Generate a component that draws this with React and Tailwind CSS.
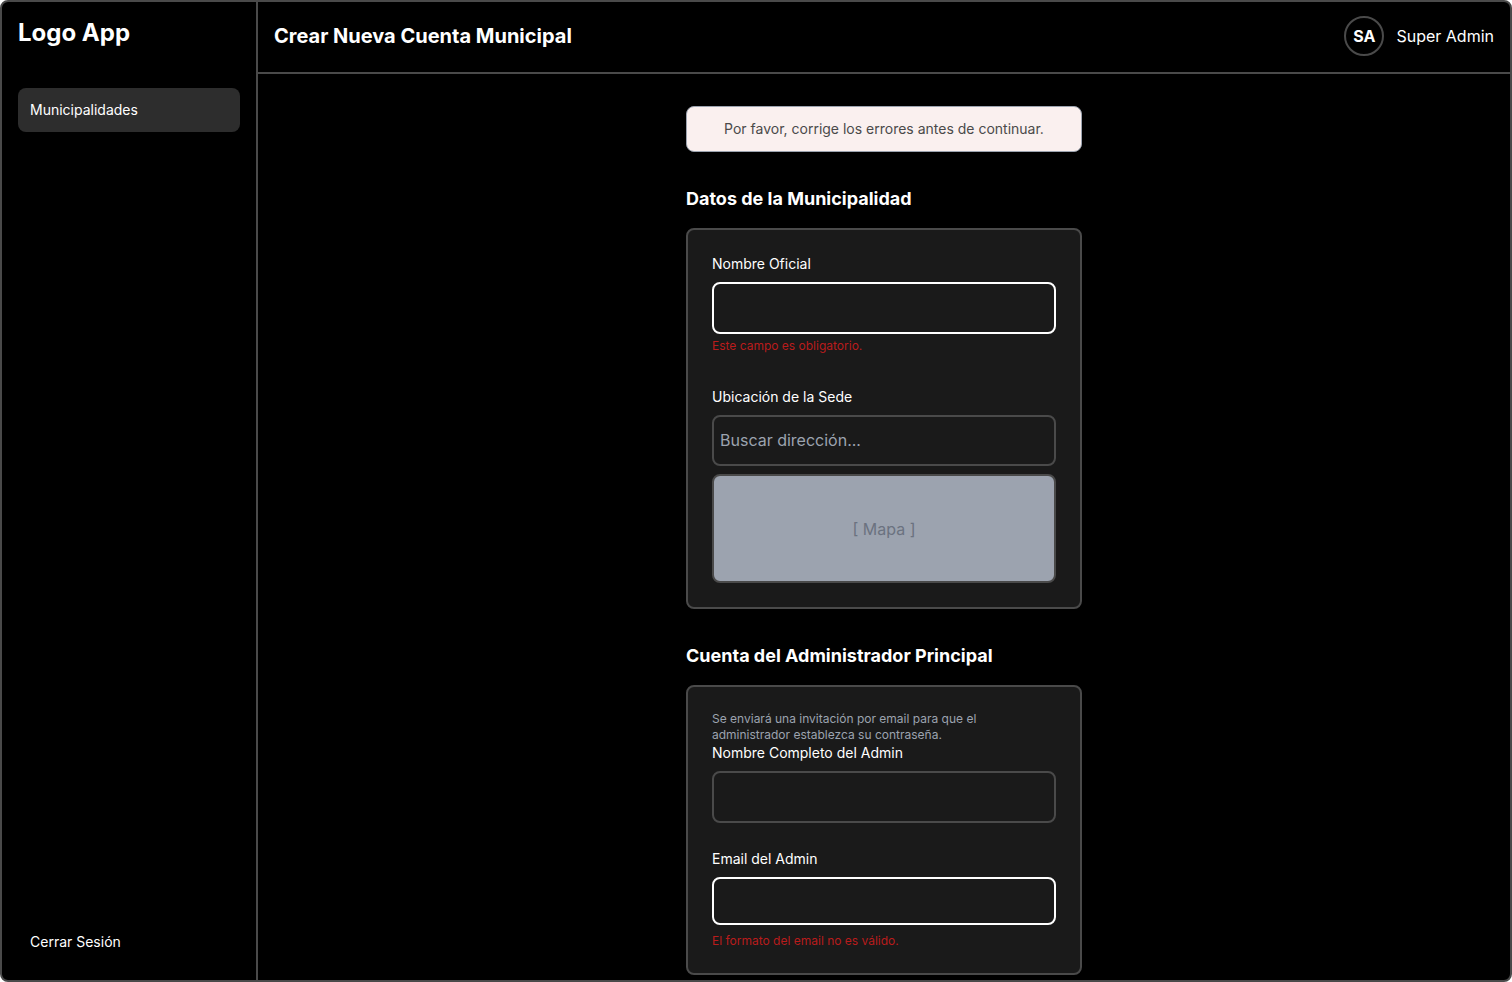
const inputBase =
  "block w-full rounded-lg border-2 bg-[#1a1a1a] px-1.5 pb-0.5 text-base text-white outline-none placeholder:text-[#9ca3af] placeholder:opacity-100";

function Section({ title, children }) {
  return (
    <section className="mt-8">
      <h2 className="mb-3.5 text-lg leading-[30px] font-bold">{title}</h2>
      <div className="rounded-lg border-2 border-[#4a4a4a] bg-[#1a1a1a] p-6">{children}</div>
    </section>
  );
}

function Label({ htmlFor, children }) {
  return (
    <label htmlFor={htmlFor} className="mb-2 block text-sm leading-5">
      {children}
    </label>
  );
}

function Sidebar() {
  return (
    <aside className="flex w-64 shrink-0 flex-col justify-between border-r-2 border-[#4a4a4a] p-4">
      <div>
        <div className="text-2xl leading-[30px] font-bold">Logo App</div>
        <nav className="mt-10">
          <a href="#municipalidades" className="block rounded-lg bg-[#2d2d2d] p-3 text-sm leading-5">
            Municipalidades
          </a>
        </nav>
      </div>
      <button type="button" className="rounded-lg p-3 text-left text-sm leading-5">
        Cerrar Sesión
      </button>
    </aside>
  );
}

function Header() {
  return (
    <header className="flex items-center justify-between border-b-2 border-[#4a4a4a] px-4 pt-3.5 pb-4">
      <h1 className="text-xl leading-7 font-bold">Crear Nueva Cuenta Municipal</h1>
      <div className="flex items-center gap-3">
        <div className="flex size-10 items-center justify-center rounded-full border-2 border-[#4a4a4a] font-bold">
          SA
        </div>
        <span>Super Admin</span>
      </div>
    </header>
  );
}

export default function App() {
  return (
    <div className="min-h-screen bg-white font-['Inter',sans-serif] text-white">
      <div className="flex min-h-screen rounded-lg border-2 border-[#4a4a4a] bg-black">
        <Sidebar />
        <div className="flex min-w-0 flex-1 flex-col">
          <Header />
          <main className="flex flex-1 flex-col items-center pt-8 pb-1">
            <form className="w-full max-w-[396px]" noValidate>
              <p
                role="alert"
                className="rounded-lg border border-[#9ca3af] bg-[#faf0ef] p-3 text-center text-sm leading-5 text-[#4a4a4a]"
              >
                Por favor, corrige los errores antes de continuar.
              </p>

              <Section title="Datos de la Municipalidad">
                <Label htmlFor="nombre">Nombre Oficial</Label>
                <input id="nombre" type="text" className={`${inputBase} h-[52px] border-white`} />
                <p className="mt-1 text-xs leading-4 text-[#b91c1c]">Este campo es obligatorio.</p>

                <div className="mt-[33px]">
                  <Label htmlFor="ubicacion">Ubicación de la Sede</Label>
                  <input
                    id="ubicacion"
                    type="text"
                    placeholder="Buscar dirección..."
                    className={`${inputBase} h-[51px] border-[#4a4a4a]`}
                  />
                  <div className="mt-2 flex h-[109px] items-center justify-center rounded-lg border-2 border-[#4a4a4a] bg-[#9ca3af] text-[#6b7280]">
                    [ Mapa ]
                  </div>
                </div>
              </Section>

              <Section title="Cuenta del Administrador Principal">
                <p className="text-xs leading-4 text-[#9ca3af]">
                  Se enviará una invitación por email para que el administrador establezca su contraseña.
                </p>
                <Label htmlFor="admin">Nombre Completo del Admin</Label>
                <input id="admin" type="text" className={`${inputBase} h-[52px] border-[#4a4a4a]`} />

                <div className="mt-[26px]">
                  <Label htmlFor="email">Email del Admin</Label>
                  <input id="email" type="email" className={`${inputBase} h-12 border-white`} />
                  <p className="mt-2 text-xs leading-4 text-[#b91c1c]">El formato del email no es válido.</p>
                </div>
              </Section>
            </form>
          </main>
        </div>
      </div>
    </div>
  );
}
